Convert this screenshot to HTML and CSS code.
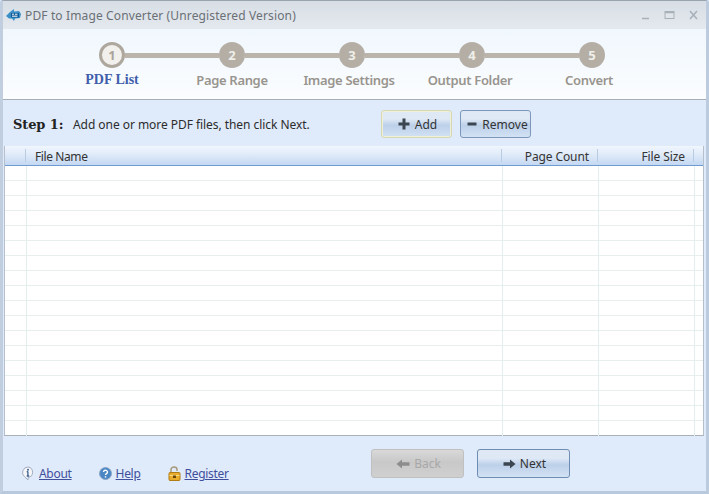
FILE: index.html
```html
<!DOCTYPE html>
<html lang="en">
<head>
<meta charset="utf-8">
<title>PDF to Image Converter</title>
<link rel="stylesheet" href="styles.css">
</head>
<body>
<div class="window">
  <header class="titlebar">
    <svg class="appicon" width="17" height="14" viewBox="0 0 17 14"><path d="M1 8 L5 4 L9 1 L9 3.500 L14 3 L16 6 L15 10 L10 10.500 L9 13 L7 10.500 L4 10.500Z" fill="#3a8fc6"/><path d="M6 5h8v4.500H6z" fill="#0f5a94"/><path d="M7 6.200h2M10 6.200h2.500M7 8.200h5.500" stroke="#fff" stroke-width="1"/></svg>
    <span class="title">PDF to Image Converter (Unregistered Version)</span>
    <div class="winctl">
      <svg width="10" height="10" viewBox="0 0 10 10"><path d="M1 8.500h7" stroke="#a9b1b8" stroke-width="1.500"/></svg>
      <svg width="11" height="10" viewBox="0 0 11 10"><rect x="1" y="1.500" width="9" height="7" fill="#dfe5ea" stroke="#a9b1b8"/><path d="M1 2.500h9" stroke="#a9b1b8" stroke-width="1.500"/></svg>
      <svg width="11" height="10" viewBox="0 0 11 10"><path d="M2 1l7 8M9 1l-7 8" stroke="#a9b1b8" stroke-width="1.600"/></svg>
    </div>
  </header>
  <nav class="steps">
    <div class="track">
      <span class="dot current">1</span><span class="link"></span>
      <span class="dot">2</span><span class="link"></span>
      <span class="dot">3</span><span class="link"></span>
      <span class="dot">4</span><span class="link"></span>
      <span class="dot">5</span>
    </div>
    <div class="labels">
      <span class="label current">PDF List</span>
      <span class="label">Page Range</span>
      <span class="label shift-a">Image Settings</span>
      <span class="label shift-b">Output Folder</span>
      <span class="label shift-c">Convert</span>
    </div>
  </nav>
  <section class="toolbar">
    <b class="steptitle">Step 1:</b>
    <span class="stephint">Add one or more PDF files, then click Next.</span>
    <div class="toolbtns">
      <button class="btn add"><svg width="12" height="12" viewBox="0 0 12 12"><path d="M6 0.500v11M0.500 6h11" stroke="#3c4650" stroke-width="3"/></svg>Add</button>
      <button class="btn remove"><svg width="10" height="10" viewBox="0 0 10 10"><path d="M0.500 5h9" stroke="#3c4650" stroke-width="3"/></svg>Remove</button>
    </div>
  </section>
  <section class="table">
    <div class="thead">
      <span class="hc c0"></span>
      <span class="hc c1">File Name</span>
      <span class="hc c2">Page Count</span>
      <span class="hc c3">File Size</span>
    </div>
    <div class="tbody">
      <div class="row"><i class="c0"></i><i class="c1"></i><i class="c2"></i><i class="c3"></i></div>
      <div class="row"><i class="c0"></i><i class="c1"></i><i class="c2"></i><i class="c3"></i></div>
      <div class="row"><i class="c0"></i><i class="c1"></i><i class="c2"></i><i class="c3"></i></div>
      <div class="row"><i class="c0"></i><i class="c1"></i><i class="c2"></i><i class="c3"></i></div>
      <div class="row"><i class="c0"></i><i class="c1"></i><i class="c2"></i><i class="c3"></i></div>
      <div class="row"><i class="c0"></i><i class="c1"></i><i class="c2"></i><i class="c3"></i></div>
      <div class="row"><i class="c0"></i><i class="c1"></i><i class="c2"></i><i class="c3"></i></div>
      <div class="row"><i class="c0"></i><i class="c1"></i><i class="c2"></i><i class="c3"></i></div>
      <div class="row"><i class="c0"></i><i class="c1"></i><i class="c2"></i><i class="c3"></i></div>
      <div class="row"><i class="c0"></i><i class="c1"></i><i class="c2"></i><i class="c3"></i></div>
      <div class="row"><i class="c0"></i><i class="c1"></i><i class="c2"></i><i class="c3"></i></div>
      <div class="row"><i class="c0"></i><i class="c1"></i><i class="c2"></i><i class="c3"></i></div>
      <div class="row"><i class="c0"></i><i class="c1"></i><i class="c2"></i><i class="c3"></i></div>
      <div class="row"><i class="c0"></i><i class="c1"></i><i class="c2"></i><i class="c3"></i></div>
      <div class="row"><i class="c0"></i><i class="c1"></i><i class="c2"></i><i class="c3"></i></div>
      <div class="row"><i class="c0"></i><i class="c1"></i><i class="c2"></i><i class="c3"></i></div>
      <div class="row"><i class="c0"></i><i class="c1"></i><i class="c2"></i><i class="c3"></i></div>
      <div class="row last"><i class="c0"></i><i class="c1"></i><i class="c2"></i><i class="c3"></i></div>
    </div>
  </section>
  <footer class="footer">
    <div class="links">
      <span class="linkitem">
        <svg width="14" height="15" viewBox="0 0 14 15"><path d="M7 1a5.500 5.500 0 0 0-3.500 9.700L7 14v-2.500a5.300 5.300 0 0 0 0-10.500z" fill="#f4f6fa" stroke="#a3acc0"/><circle cx="7" cy="3.800" r="1" fill="#3f5f8f"/><path d="M6.900 5.500v4.500M5.700 10h2.500M5.700 5.700h1.200" stroke="#3f5f8f" stroke-width="1.300"/></svg>
        <a href="#">About</a>
      </span>
      <span class="linkitem">
        <svg width="13" height="13" viewBox="0 0 13 13"><circle cx="6.500" cy="6.500" r="6" fill="#4b86c4" stroke="#8aa6c6"/><path d="M4.500 5a2 1.800 0 1 1 3 1.600c-.7.400-1 .8-1 1.500" fill="none" stroke="#fff" stroke-width="1.400"/><path d="M6.500 9.200v1.400" stroke="#fff" stroke-width="1.400"/></svg>
        <a href="#">Help</a>
      </span>
      <span class="linkitem">
        <svg width="13" height="15" viewBox="0 0 13 15"><path d="M3 7V3.500a3 2.500 0 0 1 6 0V5" fill="none" stroke="#a79a7c" stroke-width="1.500"/><rect x="1" y="6.500" width="11" height="8" rx="1" fill="#e8ad2c" stroke="#b07c14"/><path d="M1.500 9.500h10" stroke="#f8dc82"/><rect x="5" y="9.500" width="3" height="2.500" fill="#6a4708"/></svg>
        <a href="#">Register</a>
      </span>
    </div>
    <div class="navbtns">
      <button class="btn nav back" disabled><svg width="14" height="10" viewBox="0 0 14 10"><path d="M0.500 5L6 0.500V3.200H13.500V6.800H6V9.500z" fill="#8d8d8d"/></svg>Back</button>
      <button class="btn nav next"><svg width="13" height="10" viewBox="0 0 13 10"><path d="M12.500 5L7 0.500V3.200H0.500V6.800H7V9.500z" fill="#3c4650"/></svg>Next</button>
    </div>
  </footer>
</div>
</body>
</html>
```

FILE: styles.css
```css
* { box-sizing: border-box; }
html, body { margin: 0; padding: 0; }
body { width: 709px; height: 494px; overflow: hidden; background: #dfeafa; font-family: "Noto Sans", sans-serif; font-size: 12px; color: #333; }
.window { width: 709px; height: 494px; display: flex; flex-direction: column; border: 1px solid #9aa5b0; border-width: 1px 3px 3px 3px; border-color: #98a3ae #bccbdd #b9c9dd #c0cedf; border-radius: 3px 3px 0 0; }
.titlebar { height: 28px; flex: none; display: flex; align-items: center; padding: 0 7px 0 2px; background: linear-gradient(#d7dee5, #e4e9ee); }
.appicon { margin-right: 3px; }
.title { color: #6a7076; font-size: 12px; letter-spacing: 0.13px; }
.winctl { margin-left: auto; display: flex; gap: 13px; align-items: center; }
.steps { height: 71px; flex: none; background: linear-gradient(#f0f7fd, #fbfdff); border-bottom: 1px solid #a6afb8; padding: 14px 0 0 96px; }
.track { display: flex; align-items: center; height: 24px; }
.dot { width: 26px; height: 26px; flex: none; border-radius: 50%; background: #b5aea5; color: #efefea; font: bold 13px/26px "Noto Sans", sans-serif; text-align: center; }
.dot.current { background: #f2f0ec; color: #aaa49c; border: 3px solid #aea79e; line-height: 20px; }
.link { width: 94px; height: 5px; flex: none; background: #bab4aa; }
.labels { display: grid; grid-template-columns: repeat(5, 120px); margin: 4px 0 0 -47px; }
.label { text-align: center; color: #98948e; font-size: 13px; font-weight: 600; letter-spacing: -0.33px; white-space: nowrap; line-height: 16px; padding-top: 1px; }
.label.current { color: #3f5eab; font: bold 14px/16px "Liberation Serif", serif; letter-spacing: 0; }
.shift-a { transform: translateX(-3px); }
.shift-b { transform: translateX(-2px); }
.shift-c { transform: translateX(-3px); }
.toolbar { height: 46px; flex: none; display: flex; align-items: center; padding: 2px 0 0 10px; background: #dfeafa; }
.steptitle { font: bold 13px "DejaVu Serif", serif; letter-spacing: -0.1px; color: #222; width: 60px; }
.stephint { color: #2c2c2c; font-size: 12px; letter-spacing: -0.05px; }
.toolbtns { margin-left: auto; display: flex; gap: 8px; margin-right: 175px; }
.btn { display: flex; align-items: center; justify-content: center; gap: 7px; height: 28px; padding: 0; border: 1px solid #7d97b8; border-radius: 3px; background: linear-gradient(#dfe9f6 0, #dfe9f6 30%, #bcd0e9 55%, #d3e2f4 100%); font: 12px "Noto Sans", sans-serif; color: #333; }
.add { width: 71px; gap: 5px; padding-left: 2px; border-color: #d8d8b0; box-shadow: 0 0 0 1px #eef0da inset; }
.remove { width: 71px; gap: 5px; padding-left: 4px; }
.table { width: 700px; height: 290px; flex: none; margin-left: 1px; border: 1px solid #b5c0cc; border-bottom-color: #a9b0b8; background: #fff; border-top: 0; display: flex; flex-direction: column; }
.thead { height: 20px; flex: none; display: flex; background: linear-gradient(#f1f6fd, #e0ebf9 45%, #c4d8f2); border-bottom: 1px solid #6e9bd2; font-size: 12px; color: #333; }
.hc { line-height: 21px; white-space: nowrap; position: relative; }
.hc::after { content: ""; position: absolute; right: 0; top: 3px; bottom: 3px; width: 1px; background: #b9cce2; }
.c0 { width: 21px; flex: none; }
.c1 { width: 476px; flex: none; }
.c2 { width: 96px; flex: none; }
.c3 { width: 96px; flex: none; }
.row .c0 { width: 22px; }
.thead .c1 { padding-left: 9px; letter-spacing: -0.4px; }
.thead .c2 { text-align: right; padding-right: 9px; letter-spacing: -0.1px; }
.thead .c3 { text-align: right; padding-right: 9px; letter-spacing: -0.1px; }
.tbody { flex: 1; }
.row { height: 15px; display: flex; border-bottom: 1px solid #e7eeee; }
.row.last { border-bottom: 0; }
.row i { display: block; border-right: 1px solid #e3eeee; }
.footer { flex: 1; display: flex; background: #dfeafa; }
.links { display: flex; align-items: flex-end; padding: 0 0 9px 18px; gap: 27px; }
.linkitem { display: flex; align-items: center; gap: 4px; }
.linkitem a { color: #3f4f9c; font-size: 12px; letter-spacing: -0.3px; text-decoration: underline; }
.navbtns { display: flex; gap: 13px; margin: 13px 136px 0 auto; align-items: flex-start; }
.nav { width: 93px; height: 29px; gap: 4px; padding-left: 2px; }
.back { background: linear-gradient(#d9d9d9, #c8c8c8 45%, #d0d0d0); border-color: #c0c0c0; color: #a8a8a8; }
.next { border-color: #6f8db3; }
```
